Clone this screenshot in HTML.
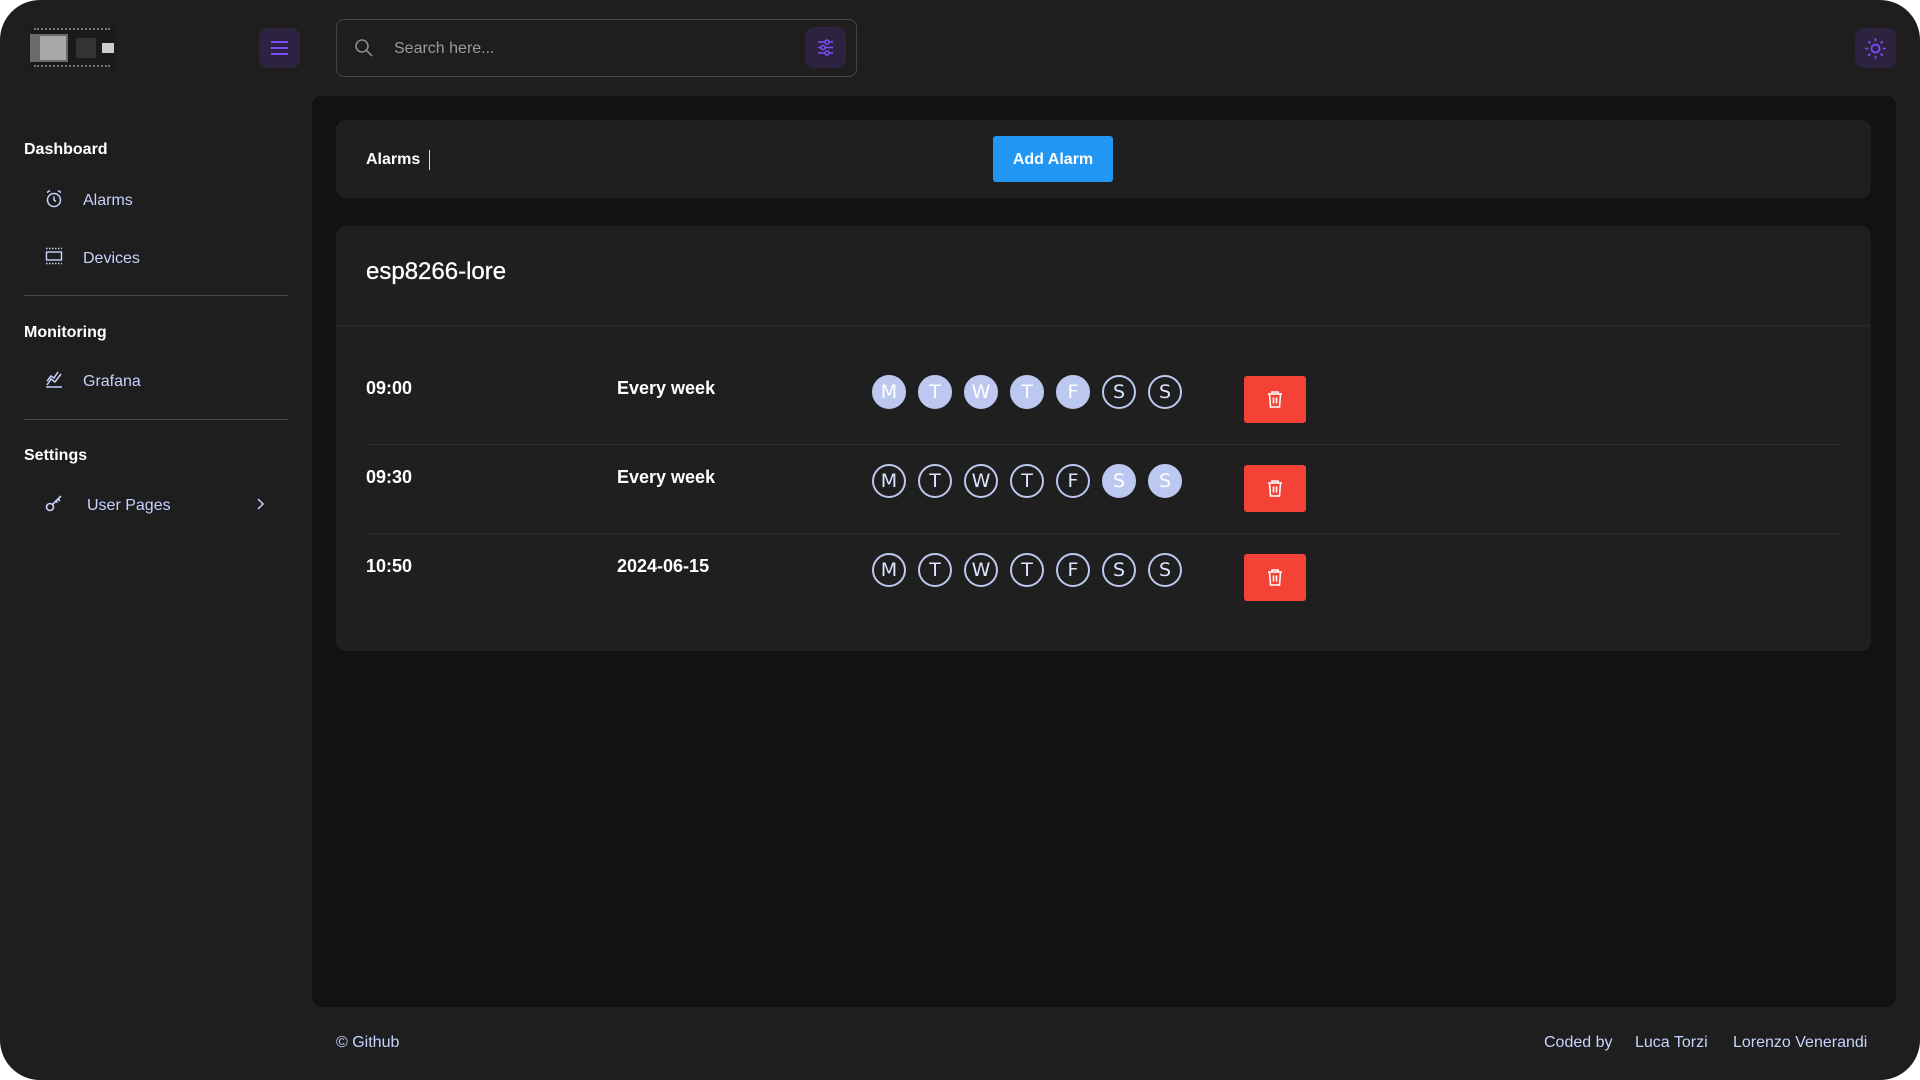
<!DOCTYPE html>
<html><head><meta charset="utf-8"><style>
*{margin:0;padding:0;box-sizing:border-box}
html,body{width:1920px;height:1080px;background:#fff;overflow:hidden;font-family:"Liberation Sans",Arial,sans-serif}
#app{position:absolute;left:0;top:0;width:1920px;height:1080px;background:#1e1e1e;border-radius:40px;overflow:hidden}
.a{position:absolute}
.btnp{background:#2d2340;border-radius:9px}
.side{color:#fff;font-weight:bold;font-size:16px}
.item{color:#c9d1ff;font-size:16px}
.div{height:1px;background:#4a4a4a}
.card{background:#1f1f1f;border-radius:10px}
.t{color:#fff;font-size:18px;font-weight:bold}
.c{position:absolute;width:34px;height:34px;border-radius:50%;border:2px solid #bcc8f0;color:#dfe5ff;font-size:19px;text-align:center;line-height:30px;font-family:"DejaVu Sans",sans-serif}
.c.f{background:#bcc8f0;color:#fff}
.del{position:absolute;left:1244px;width:62px;height:47px;background:#f44336;border-radius:3px}
.ft{color:#c6d4ff;font-size:16px}
</style></head><body><div id="app">
<!-- logo -->
<div class="a" style="left:30px;top:28px;width:85px;height:40px;background:#1a1a1a">
 <div class="a" style="left:0;top:6px;width:38px;height:28px;background:#6a6a6a"></div>
 <div class="a" style="left:10px;top:8px;width:26px;height:24px;background:#a8a8a8"></div>
 <div class="a" style="left:4px;top:0;width:76px;height:3px;border-top:2px dotted #777"></div>
 <div class="a" style="left:4px;top:37px;width:76px;height:3px;border-top:2px dotted #777"></div>
 <div class="a" style="left:72px;top:15px;width:12px;height:10px;background:#ccc"></div>
 <div class="a" style="left:46px;top:10px;width:20px;height:20px;background:#333"></div>
</div>
<!-- hamburger -->
<div class="a btnp" style="left:259px;top:28px;width:41px;height:40px">
 <div class="a" style="left:12px;top:13px;width:17px;height:2px;background:#7c4dff"></div>
 <div class="a" style="left:12px;top:19px;width:17px;height:2px;background:#7c4dff"></div>
 <div class="a" style="left:12px;top:25px;width:17px;height:2px;background:#7c4dff"></div>
</div>
<!-- search -->
<div class="a" style="left:336px;top:19px;width:521px;height:58px;border:1px solid #444;border-radius:8px"></div>
<svg class="a" style="left:354px;top:38px" width="20" height="20" viewBox="0 0 20 20"><circle cx="8" cy="8" r="6" fill="none" stroke="#8a8a8a" stroke-width="1.6"/><path d="M12.5 12.5L18 18" stroke="#8a8a8a" stroke-width="1.6"/></svg>
<div class="a" style="left:394px;top:40px;color:#9a9a9a;font-size:16px">Search here...</div>
<div class="a btnp" style="left:805px;top:27px;width:41px;height:41px">
 <svg class="a" style="left:11px;top:11px" width="19" height="19" viewBox="0 0 19 19" fill="none" stroke="#7c4dff" stroke-width="1.5"><path d="M2 4h15M2 9.5h15M2 15h15"/><circle cx="11" cy="4" r="2" fill="#2d2340"/><circle cx="7" cy="9.5" r="2" fill="#2d2340"/><circle cx="11" cy="15" r="2" fill="#2d2340"/></svg>
</div>
<!-- theme -->
<div class="a btnp" style="left:1855px;top:28px;width:41px;height:40px">
 <svg class="a" style="left:10px;top:10px" width="21" height="21" viewBox="0 0 21 21" fill="none" stroke="#7c4dff" stroke-width="1.8" stroke-linecap="round"><circle cx="10.5" cy="10.5" r="4"/><path d="M10.5 1v1.5M10.5 18.5V20M1 10.5h1.5M18.5 10.5H20M3.8 3.8l1 1M16.2 16.2l1 1M3.8 17.2l1-1M16.2 4.8l1-1"/></svg>
</div>
<!-- sidebar -->
<div class="a side" style="left:24px;top:141px">Dashboard</div>
<svg class="a" style="left:45px;top:189px" width="18" height="19" viewBox="0 0 18 19" fill="none" stroke="#c9d1ff" stroke-width="1.5"><circle cx="9" cy="11" r="6.5"/><path d="M9 7.5V11l2 1.5M2 3.5l3-2M16 3.5l-3-2"/></svg>
<div class="a item" style="left:83px;top:192px">Alarms</div>
<svg class="a" style="left:45px;top:247px" width="18" height="18" viewBox="0 0 18 18" fill="none" stroke="#c9d1ff" stroke-width="1.4"><path d="M1 1.5h16M1 16.5h16" stroke-dasharray="1.5 1.5"/><rect x="1.5" y="5" width="15" height="8"/></svg>
<div class="a item" style="left:83px;top:250px">Devices</div>
<div class="a div" style="left:24px;top:295px;width:264px"></div>
<div class="a side" style="left:24px;top:324px">Monitoring</div>
<svg class="a" style="left:45px;top:370px" width="18" height="18" viewBox="0 0 18 18" fill="none" stroke="#c9d1ff" stroke-width="1.5"><path d="M1 17h16M2 15l4-6 4 3 6-8M2 11l4-5 3 2 4-6"/></svg>
<div class="a item" style="left:83px;top:373px">Grafana</div>
<div class="a div" style="left:24px;top:419px;width:264px"></div>
<div class="a side" style="left:24px;top:447px">Settings</div>
<svg class="a" style="left:45px;top:494px" width="18" height="18" viewBox="0 0 18 18" fill="none" stroke="#c9d1ff" stroke-width="1.6"><circle cx="5" cy="13" r="3.5"/><path d="M7.5 10.5L16 2M13 5l2 2M11 7l1.5 1.5"/></svg>
<div class="a item" style="left:87px;top:497px">User Pages</div>
<svg class="a" style="left:255px;top:497px" width="10" height="14" viewBox="0 0 10 14" fill="none" stroke="#c9d1ff" stroke-width="1.5"><path d="M3 2l5 5-5 5"/></svg>
<!-- main -->
<div class="a" style="left:312px;top:96px;width:1584px;height:911px;background:#121212;border-radius:10px"></div>
<div class="a card" style="left:336px;top:120px;width:1535px;height:78px"></div>
<div class="a" style="left:366px;top:151px;color:#fff;font-size:16px;font-weight:bold">Alarms</div>
<div class="a" style="left:429px;top:150px;width:1px;height:20px;background:#ddd"></div>
<div class="a" style="left:993px;top:136px;width:120px;height:46px;background:#2196f3;border-radius:3px;color:#fff;font-size:16px;font-weight:bold;text-align:center;line-height:48px">Add Alarm</div>
<div class="a card" style="left:336px;top:226px;width:1535px;height:425px"></div>
<div class="a" style="left:366px;top:258px;color:#fff;font-size:24px;-webkit-text-stroke:0.3px #fff">esp8266-lore</div>
<div class="a" style="left:336px;top:325px;width:1535px;height:1px;background:#2a2a2a"></div>
<div class="a" style="left:366px;top:444px;width:1475px;height:1px;background:#2c2c2c"></div>
<div class="a" style="left:366px;top:533px;width:1475px;height:1px;background:#2c2c2c"></div>
<!-- rows -->
<div class="a t" style="left:366px;top:378px">09:00</div>
<div class="a t" style="left:617px;top:378px">Every week</div>
<div class="a t" style="left:366px;top:467px">09:30</div>
<div class="a t" style="left:617px;top:467px">Every week</div>
<div class="a t" style="left:366px;top:556px">10:50</div>
<div class="a t" style="left:617px;top:556px">2024-06-15</div>

<div class="c f" style="left:872px;top:375px">M</div><div class="c f" style="left:918px;top:375px">T</div><div class="c f" style="left:964px;top:375px">W</div><div class="c f" style="left:1010px;top:375px">T</div><div class="c f" style="left:1056px;top:375px">F</div><div class="c" style="left:1102px;top:375px">S</div><div class="c" style="left:1148px;top:375px">S</div>
<div class="c" style="left:872px;top:464px">M</div><div class="c" style="left:918px;top:464px">T</div><div class="c" style="left:964px;top:464px">W</div><div class="c" style="left:1010px;top:464px">T</div><div class="c" style="left:1056px;top:464px">F</div><div class="c f" style="left:1102px;top:464px">S</div><div class="c f" style="left:1148px;top:464px">S</div>
<div class="c" style="left:872px;top:553px">M</div><div class="c" style="left:918px;top:553px">T</div><div class="c" style="left:964px;top:553px">W</div><div class="c" style="left:1010px;top:553px">T</div><div class="c" style="left:1056px;top:553px">F</div><div class="c" style="left:1102px;top:553px">S</div><div class="c" style="left:1148px;top:553px">S</div>

<div class="del" style="top:376px"><svg class="a" style="left:22px;top:14px" width="18" height="19" viewBox="0 0 18 19" fill="none" stroke="#fff" stroke-width="1.6"><path d="M2 4h14M6 4V2h6v2M3.5 4l1 13h9l1-13M7.5 7.5v6M10.5 7.5v6"/></svg></div>
<div class="del" style="top:465px"><svg class="a" style="left:22px;top:14px" width="18" height="19" viewBox="0 0 18 19" fill="none" stroke="#fff" stroke-width="1.6"><path d="M2 4h14M6 4V2h6v2M3.5 4l1 13h9l1-13M7.5 7.5v6M10.5 7.5v6"/></svg></div>
<div class="del" style="top:554px"><svg class="a" style="left:22px;top:14px" width="18" height="19" viewBox="0 0 18 19" fill="none" stroke="#fff" stroke-width="1.6"><path d="M2 4h14M6 4V2h6v2M3.5 4l1 13h9l1-13M7.5 7.5v6M10.5 7.5v6"/></svg></div>
<!-- footer -->
<div class="a ft" style="left:336px;top:1034px">© Github</div>
<div class="a ft" style="left:1544px;top:1034px">Coded by</div>
<div class="a ft" style="left:1635px;top:1034px">Luca Torzi</div>
<div class="a ft" style="left:1733px;top:1034px">Lorenzo Venerandi</div>
</div></body></html>
